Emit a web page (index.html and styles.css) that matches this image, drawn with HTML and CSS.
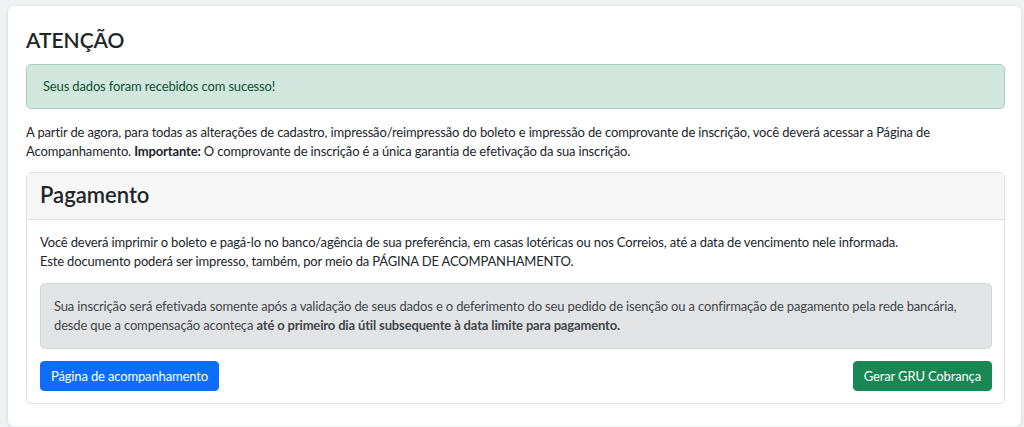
FILE: index.html
```html
<!DOCTYPE html>
<html lang="pt-BR">
<head>
    <meta charset="UTF-8">
    <meta name="viewport" content="width=device-width, initial-scale=1.0">
    <title>Inscrição</title>
    <link rel="stylesheet" href="styles.css">
</head>
<body>
    <div class="panel">
        <h1 class="title">ATENÇÃO</h1>

        <div class="alert alert-success">Seus dados foram recebidos com sucesso!</div>

        <p class="intro">A partir de agora, para todas as alterações de cadastro, impressão/reimpressão do boleto e impressão de comprovante de inscrição, você deverá acessar a Página de Acompanhamento. <strong>Importante:</strong> O comprovante de inscrição é a única garantia de efetivação da sua inscrição.</p>

        <div class="card">
            <div class="card-header">
                <h2>Pagamento</h2>
            </div>
            <div class="card-body">
                <p class="info">Você deverá imprimir o boleto e pagá-lo no banco/agência de sua preferência, em casas lotéricas ou nos Correios, até a data de vencimento nele informada.<br>Este documento poderá ser impresso, também, por meio da PÁGINA DE ACOMPANHAMENTO.</p>

                <div class="alert alert-secondary">Sua inscrição será efetivada somente após a validação de seus dados e o deferimento do seu pedido de isenção ou a confirmação de pagamento pela rede bancária, desde que a compensação aconteça <strong>até o primeiro dia útil subsequente à data limite para pagamento.</strong></div>

                <div class="actions">
                    <button class="btn btn-primary">Página de acompanhamento</button>
                    <button class="btn btn-success">Gerar GRU Cobrança</button>
                </div>
            </div>
        </div>
    </div>
</body>
</html>
```

FILE: styles.css
```css
body {
    margin: 0;
    padding: 6px 3px 0 8px;
    background: #f0f1f3;
    color: #212529;
    font-family: Lato, "Noto Sans", sans-serif;
    font-size: 13px;
    line-height: 19px;
    letter-spacing: -0.15px;
}

.panel {
    background: #fff;
    border-radius: 6px;
    box-shadow: 0 1px 4px rgba(0, 0, 0, 0.12);
    padding: 19px 16px 22px 18px;
}

.title {
    margin: 0 0 9px 0;
    font-size: 21px;
    font-weight: 600;
    line-height: 30px;
    letter-spacing: 0;
}

.alert {
    border: 1px solid transparent;
    border-radius: 5px;
}

.alert-success {
    background: #d1e7dd;
    border-color: #a3cfbb;
    color: #0f5132;
    padding: 12px 16px;
    margin-bottom: 14px;
}

.alert-secondary {
    background: #e2e3e5;
    border-color: #d3d6d8;
    color: #41464b;
    padding: 13px 6px 13px 13px;
    margin-bottom: 12px;
}

.intro {
    margin: 0 0 11px 0;
}

.card {
    border: 1px solid #dfdfdf;
    border-radius: 5px;
}

.card-header {
    background: #f7f7f7;
    border-bottom: 1px solid #dfdfdf;
    padding: 8px 13px 10px 13px;
}

.card-header h2 {
    margin: 0;
    font-size: 22px;
    font-weight: 600;
    line-height: 28px;
    letter-spacing: 0;
}

.card-body {
    padding: 13px 12px 12px 13px;
}

.info {
    margin: 0 0 12px 0;
}

.actions {
    display: flex;
    justify-content: space-between;
}

.btn {
    border: 1px solid transparent;
    border-radius: 4px;
    color: #fff;
    font-family: inherit;
    font-size: 13px;
    letter-spacing: inherit;
    line-height: 18px;
    padding: 5px 10px;
    cursor: pointer;
}

.btn-primary {
    background: #0d6efd;
    border-color: #0d6efd;
}

.btn-success {
    background: #198754;
    border-color: #198754;
}
```
